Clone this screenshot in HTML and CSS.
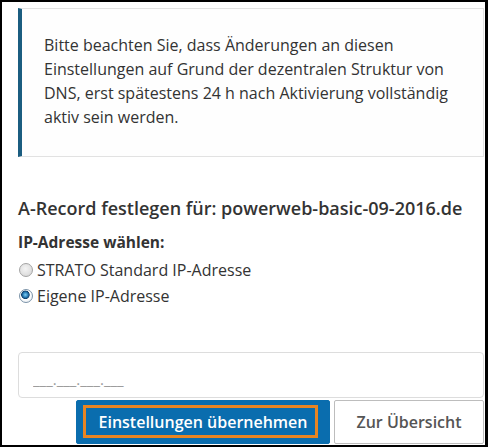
FILE: index.html
```html
<!DOCTYPE html>
<html lang="de">
<head>
    <meta charset="UTF-8">
    <meta name="viewport" content="width=device-width, initial-scale=1.0">
    <title>A-Record festlegen</title>
    <link rel="stylesheet" href="styles.css">
</head>
<body>
    <div class="frame">
        <div class="notice">
            <p>Bitte beachten Sie, dass Änderungen an diesen Einstellungen auf Grund der dezentralen Struktur von DNS, erst spätestens 24 h nach Aktivierung vollständig aktiv sein werden.</p>
        </div>

        <h3 class="recordTitle">A-Record festlegen für: powerweb-basic-09-2016.de</h3>

        <div class="ipChoice">
            <p class="label">IP-Adresse wählen:</p>
            <label class="option"><input type="radio" name="ip"> STRATO Standard IP-Adresse</label>
            <label class="option"><input type="radio" name="ip" checked> Eigene IP-Adresse</label>
        </div>

        <input class="ipInput" type="text" placeholder="___.___.___.___">

        <div class="actions">
            <button class="btn primary"><span class="focusRing">Einstellungen übernehmen</span></button>
            <button class="btn secondary">Zur Übersicht</button>
        </div>
    </div>
</body>
</html>
```

FILE: styles.css
```css
body {
    margin: 0;
    font-family: "Open Sans", Arial, sans-serif;
    color: #333333;
    background-color: #ffffff;
}

.frame {
    box-sizing: border-box;
    width: 488px;
    height: 447px;
    border: solid #000000;
    border-width: 2px 3px 2px 2px;
    padding: 6px 1px 0 16px;
    display: flex;
    flex-direction: column;
    overflow: hidden;
}

.notice {
    box-sizing: border-box;
    height: 149px;
    border: 1px solid #e2e2e2;
    border-left: 4px solid #1b5d80;
    padding: 24px 20px 0 22px;
    background-color: #fefefe;
}

.notice p {
    margin: 0;
    font-size: 16px;
    line-height: 24px;
}

.recordTitle {
    margin: 38px 0 0 0;
    font-size: 18px;
    font-weight: 600;
    line-height: 26px;
}

.ipChoice {
    margin-top: 9px;
    display: flex;
    flex-direction: column;
}

.label {
    margin: 0;
    font-size: 15.5px;
    font-weight: 700;
    line-height: 24px;
}

.option {
    display: flex;
    align-items: center;
    gap: 4px;
    font-size: 16px;
    line-height: 26px;
}

.option:first-of-type {
    margin-top: 3px;
}

.option input {
    appearance: none;
    margin: 0 0 0 1px;
    width: 14px;
    height: 14px;
    border-radius: 50%;
    border: 1px solid #a4a4a4;
    background: radial-gradient(circle at 45% 40%, #f4f4f4 0%, #e2e2e2 55%, #cfcfcf 100%);
    box-sizing: border-box;
}

.option input:checked {
    border-color: #7b93a8;
    background: radial-gradient(circle at 45% 40%, #7fd0f5 0%, #2a7fba 25%, #0f416e 40%, #ffffff 47%, #eef2f6 72%, #c7d1dc 100%);
}

.ipInput {
    box-sizing: border-box;
    margin-top: 43px;
    height: 46px;
    border: 1px solid #dddddd;
    border-radius: 4px;
    padding: 8px 14px 0;
    font-family: inherit;
    font-size: 15px;
    outline: none;
}

.ipInput::placeholder {
    color: #9a9a9a;
}

.actions {
    display: flex;
    justify-content: flex-end;
    gap: 4px;
    margin-top: 2px;
}

.btn {
    box-sizing: border-box;
    height: 44px;
    font-family: inherit;
    font-size: 16px;
    font-weight: 600;
    border-radius: 2px;
    cursor: pointer;
}

.primary {
    width: 254px;
    color: #ffffff;
    background-color: #0a6dae;
    border: 1px solid #0a6dae;
    padding: 4px 11px 5px 6px;
}

/* keyboard focus frame drawn around the label */
.focusRing {
    display: flex;
    align-items: center;
    justify-content: center;
    height: 100%;
    box-sizing: border-box;
    border: 3px solid #e98522;
    padding-left: 5px;
}

.secondary {
    width: 150px;
    color: #555555;
    background-color: #ffffff;
    border: 1px solid #bdbdbd;
}
```
